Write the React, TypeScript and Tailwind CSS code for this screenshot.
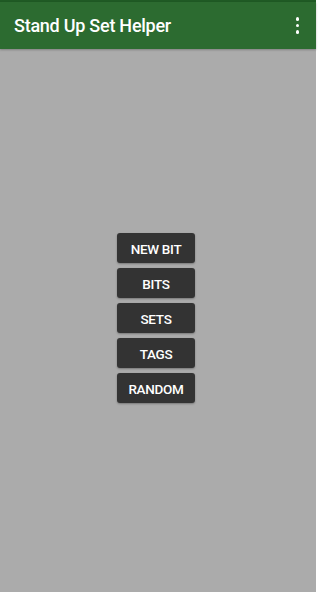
import React from "react";

export default function App() {
  const items = ["NEW BIT", "BITS", "SETS", "TAGS", "RANDOM"];
  return (
    <div
      className="w-[316px] h-[592px] flex flex-col bg-[#ababab]"
      style={{ fontFamily: "Roboto, 'Liberation Sans', sans-serif" }}
    >
      <div className="h-[2px] bg-[#1f5a24]" />
      <header className="h-[47px] bg-[#2c6b30] flex items-center justify-between pl-[14px] pr-[17px] shadow-[0_1px_2px_rgba(0,0,0,0.25)]">
        <h1 className="text-white text-[18px] font-medium tracking-[-0.25px] pb-[1px]">Stand Up Set Helper</h1>
        <div className="flex flex-col items-center gap-[3px]">
          <span className="w-[3.5px] h-[3.5px] rounded-full bg-white" />
          <span className="w-[3.5px] h-[3.5px] rounded-full bg-white" />
          <span className="w-[3.5px] h-[3.5px] rounded-full bg-white" />
        </div>
      </header>
      <main className="flex-1 flex flex-col items-center pt-[184px] pr-[4px] gap-[5px]">
        {items.map((t) => (
          <button
            key={t}
            className="w-[78px] h-[30px] pt-[2px] rounded-[3px] bg-[#333333] text-white text-[13.5px] font-medium tracking-[-0.3px] shadow-[0_1px_2px_rgba(0,0,0,0.3)]"
          >
            {t}
          </button>
        ))}
      </main>
    </div>
  );
}
